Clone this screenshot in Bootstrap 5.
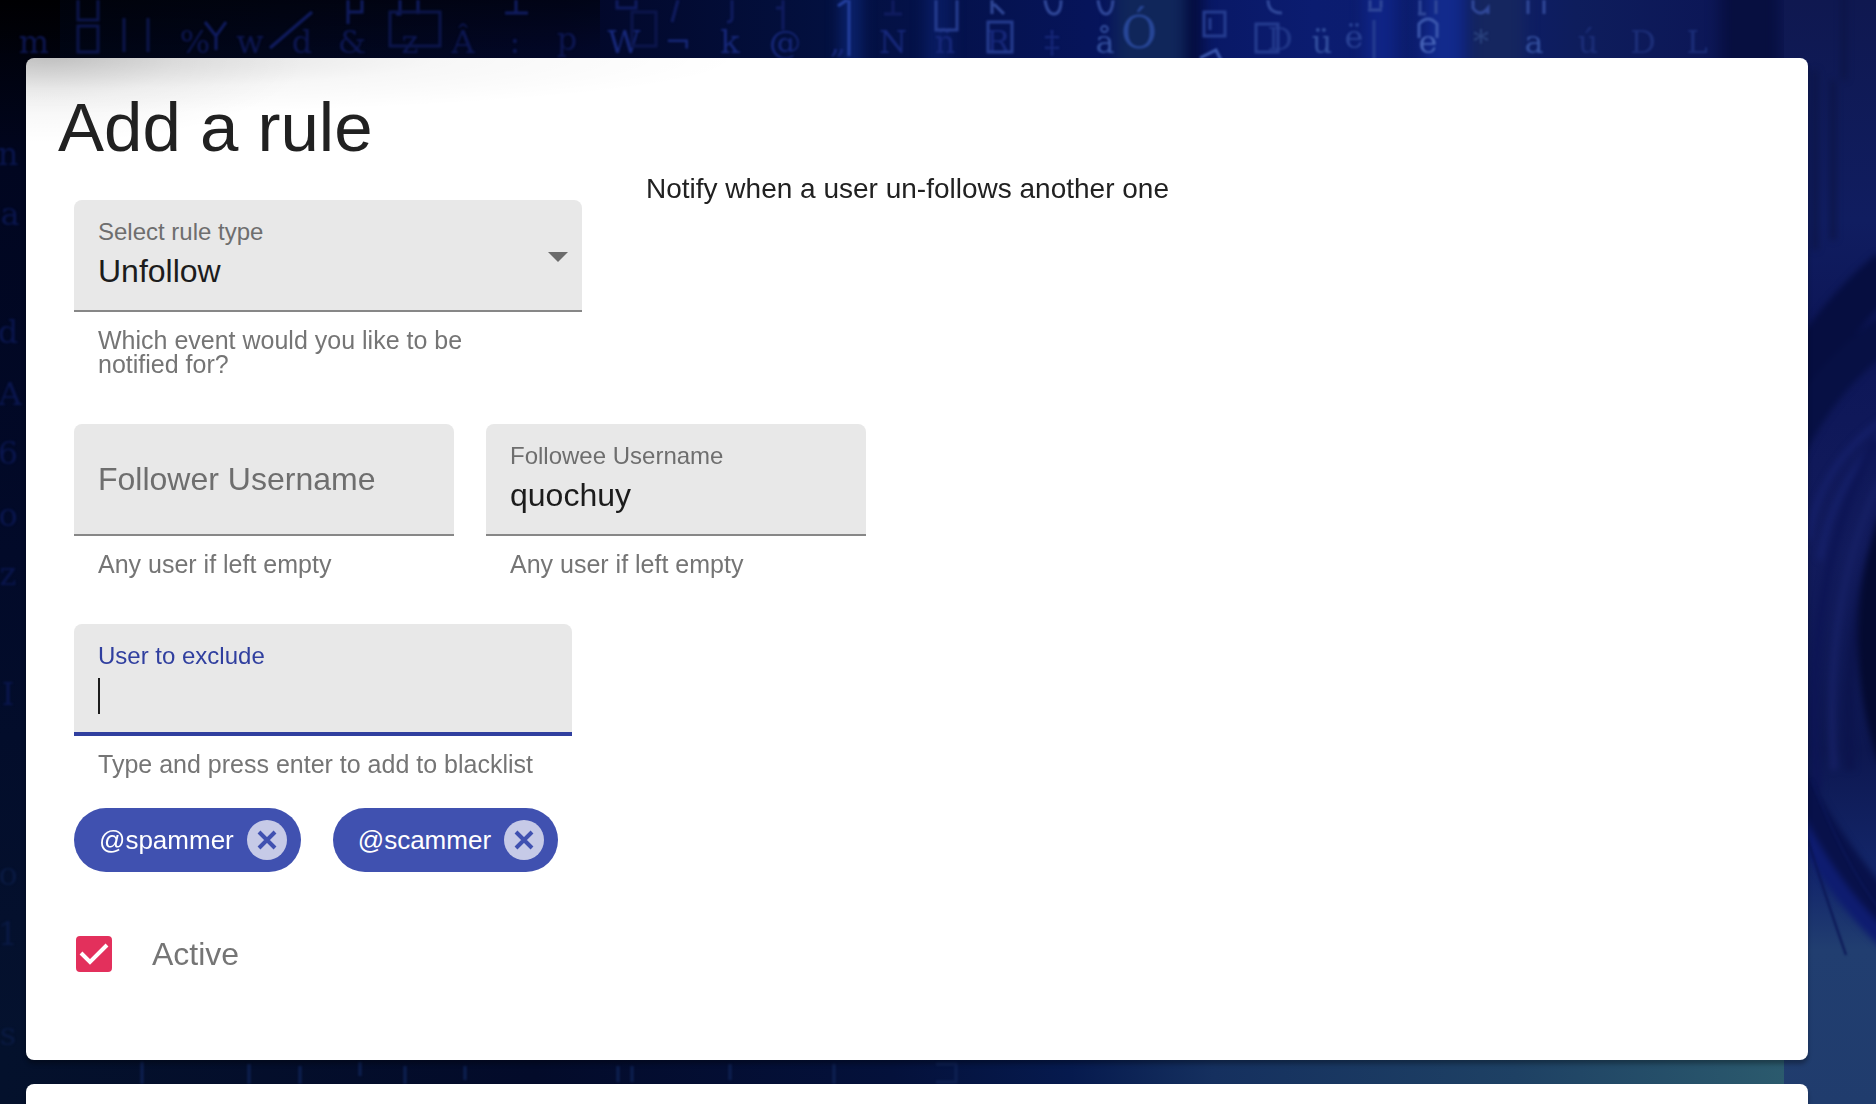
<!DOCTYPE html>
<html lang="en">
<head>
<meta charset="utf-8">
<meta name="viewport" content="width=device-width, initial-scale=1">
<title>Add a rule</title>
<link href="https://cdn.jsdelivr.net/npm/bootstrap@5.3.0/dist/css/bootstrap.min.css" rel="stylesheet">
<style>
  body { font-family: "Liberation Sans", Arial, sans-serif; color: #212121; background: #030a2c; }
  .backdrop { z-index: -1; font-family: "DejaVu Serif", serif; }
  .page { padding: 58px 68px 0 26px; gap: 24px; }
  .panel { border: 0; border-radius: 8px; box-shadow: 0 4px 4px rgba(0, 0, 0, .3); }
  .rule-panel {
    padding: 32px 32px 88px;
    background:
      radial-gradient(ellipse 260px 85px at 20px 0, rgba(0, 0, 0, .12), rgba(0, 0, 0, .04) 50%, transparent),
      radial-gradient(ellipse 680px 56px at 40px 0, rgba(0, 0, 0, .14), rgba(0, 0, 0, .03) 55%, transparent),
      #fff;
  }
  .page-title { font-size: 69px; line-height: 76px; font-weight: 400; }
  .rule-form { padding: 0 16px; }
  .type-row { gap: 64px; }
  .type-col { width: 508px; padding-top: 34px; }
  .user-col { width: 380px; }
  .exclude-col { width: 498px; }
  .description { font-size: 28px; line-height: 46px; }
  .form-row-gap { gap: 32px; margin-top: 48px; }
  .field { height: 112px; padding: 16px 24px 0; background: #e8e8e8; border-bottom: 2px solid #878787; border-radius: 8px 8px 0 0; }
  .field label { display: block; font-size: 24px; line-height: 32px; color: #6e6e6e; }
  .field input, .field select {
    display: block; width: 100%; height: 46px; padding: 0; border: 0; outline: 0; border-radius: 0;
    appearance: none; background: transparent; color: #1c1c1c; font-size: 32px; line-height: 46px;
  }
  .field.empty { padding-top: 0; }
  .field.empty input { height: 110px; }
  .field input::placeholder { color: #6e6e6e; opacity: 1; }
  .field.active { border-bottom: 4px solid #303f9f; }
  .field.active label { color: #303f9f; }
  .field.active input { caret-color: transparent; background: linear-gradient(#1c1c1c, #1c1c1c) 0 6px / 2px 36px no-repeat; }
  .arrow { right: 10px; top: 44px; pointer-events: none; }
  .hint { margin: 16px 0 0; padding-left: 24px; font-size: 25px; line-height: 24px; color: #757575; white-space: nowrap; }
  .chips { gap: 32px; margin-top: 32px; }
  .chip { height: 64px; gap: 13px; padding: 0 14px 0 25px; border-radius: 32px; background: #4051b0; color: #fff; font-size: 26px; line-height: 40px; }
  .chip button { width: 40px; height: 40px; padding: 0; border: 0; border-radius: 50%; background: #c6cae7; color: #4051b0; }
  .active-row { gap: 40px; margin-top: 64px; padding-left: 2px; }
  .active-row label { font-size: 32px; line-height: 34px; color: #757575; }
  .tick { position: relative; width: 36px; height: 36px; }
  .tick input { appearance: none; width: 36px; height: 36px; margin: 0; border-radius: 4px; display: block; border: 3px solid #757575; }
  .tick input:checked { background: #e3305c; border-color: #e3305c; }
  .tick svg { left: 0; top: 0; pointer-events: none; }
</style>
</head>
<body>
<svg class="backdrop position-fixed top-0 start-0 w-100 h-100" viewBox="0 0 1876 1104" preserveAspectRatio="xMidYMid slice" aria-hidden="true">
  <defs>
    <linearGradient id="sky" x1="0" x2="1" y1="0" y2="0">
      <stop offset="0" stop-color="#000412"/><stop offset=".15" stop-color="#01061c"/><stop offset=".3" stop-color="#020728"/>
      <stop offset=".44" stop-color="#03103f"/><stop offset=".58" stop-color="#06145a"/><stop offset=".7" stop-color="#0b1c70"/>
      <stop offset=".78" stop-color="#0c1d6e"/><stop offset=".84" stop-color="#0e1d5c"/><stop offset=".92" stop-color="#0c1656"/><stop offset="1" stop-color="#111a50"/>
    </linearGradient>
    <linearGradient id="leftEdge" x1="0" x2="0" y1="0" y2="1">
      <stop offset="0" stop-color="#000004"/><stop offset=".15" stop-color="#010620"/><stop offset=".5" stop-color="#020a29"/><stop offset="1" stop-color="#05132f"/>
    </linearGradient>
    <linearGradient id="topShade" x1="0" x2="0" y1="0" y2="1">
      <stop offset="0" stop-color="#000" stop-opacity=".45"/><stop offset="1" stop-color="#000" stop-opacity="0"/>
    </linearGradient>
    <linearGradient id="floor" x1="0" x2="1" y1="0" y2="0">
      <stop offset="0" stop-color="#04112c"/><stop offset=".3" stop-color="#030b2a"/><stop offset=".5" stop-color="#04113b"/><stop offset=".6" stop-color="#061a4e"/>
      <stop offset=".68" stop-color="#15305f"/><stop offset=".85" stop-color="#1e4164"/><stop offset="1" stop-color="#2b5a6d"/>
    </linearGradient>
    <linearGradient id="rightEdge" x1="0" x2="0" y1="0" y2="1">
      <stop offset="0" stop-color="#0f1850"/><stop offset=".2" stop-color="#101d60"/><stop offset=".3" stop-color="#0d1657"/><stop offset=".5" stop-color="#121b5c"/>
      <stop offset=".68" stop-color="#0d1750"/><stop offset=".8" stop-color="#14286c"/><stop offset=".86" stop-color="#213e70"/><stop offset="1" stop-color="#203c6d"/>
    </linearGradient>
    <filter id="soft" color-interpolation-filters="sRGB"><feGaussianBlur stdDeviation="7"/></filter>
    <filter id="strands" color-interpolation-filters="sRGB"><feGaussianBlur stdDeviation="3"/></filter>
    <filter id="haze" color-interpolation-filters="sRGB"><feGaussianBlur stdDeviation="1"/></filter>
  </defs>
  <rect width="1876" height="1104" fill="url(#sky)"/>
  <rect width="60" height="1104" fill="url(#leftEdge)"/>
  <rect width="600" height="58" fill="url(#topShade)"/>
  <rect y="1030" width="1784" height="74" fill="url(#floor)"/>
  <g filter="url(#soft)">
    <rect x="840" y="-20" width="22" height="110" fill="#0a2068"/><rect x="925" y="-20" width="26" height="110" fill="#081b60"/>
    <rect x="1115" y="-20" width="70" height="110" fill="#10265a"/><rect x="1186" y="-20" width="16" height="110" fill="#030b3c"/>
    <rect x="1365" y="-20" width="30" height="110" fill="#0f2485"/><rect x="1425" y="-20" width="38" height="110" fill="#122a8c"/>
    <rect x="1470" y="-20" width="55" height="110" fill="#15265f"/><rect x="1720" y="-20" width="60" height="110" fill="#070f40"/>
  </g>
  <rect x="1784" width="92" height="1104" fill="url(#rightEdge)"/>
  <!-- strands of hair down the right side -->
  <g fill="none" filter="url(#strands)">
    <path d="M1790 390Q1840 310 1890 270" stroke="#060e40" stroke-width="42"/>
    <path d="M1780 470Q1815 380 1890 330" stroke="#071044" stroke-width="34"/>
    <path d="M1808 540Q1820 460 1890 415M1820 560Q1830 490 1886 430" stroke="#16216c" stroke-width="5"/>
    <path d="M1818 790Q1800 580 1876 440" stroke="#0d1555" stroke-width="8"/>
    <path d="M1834 770Q1822 600 1880 480" stroke="#162064" stroke-width="7"/>
    <path d="M1850 770Q1842 620 1884 520" stroke="#0c144d" stroke-width="9"/>
    <path d="M1890 520Q1850 640 1890 760" stroke="#040a30" stroke-width="24"/>
    <path d="M1790 770Q1830 850 1890 915" stroke="#08114a" stroke-width="28"/>
    <path d="M1790 805Q1830 890 1890 945" stroke="#0e1c70" stroke-width="16"/>
    <path d="M1815 70V250M1833 80V240M1844 -20V80" stroke="#0c1546" stroke-width="5"/>
  </g>
  <path d="M1808 840Q1825 895 1846 955M1812 780Q1842 860 1880 910" fill="none" stroke="#0b1655" stroke-width="2" filter="url(#haze)"/>
  <!-- falling characters -->
  <g filter="url(#haze)" font-size="32" text-anchor="middle">
    <g fill="#0d1752">
      <text x="34" y="53">m</text><text x="195" y="53">%</text><text x="250" y="53">w</text><text x="302" y="53">d</text>
      <text x="352" y="53">&amp;</text><text x="410" y="53">z</text><text x="463" y="53">Â</text>
      <text x="515" y="53">:</text><text x="567" y="50">p</text>
    </g>
    <g fill="#17287a">
      <text x="624" y="53">W</text><text x="678" y="53">¬</text><text x="730" y="53">k</text><text x="785" y="53">@</text><text x="838" y="53">„</text>
      <text x="893" y="53">N</text><text x="945" y="53">ñ</text><text x="998" y="53">R</text><text x="1052" y="53">‡</text>
    </g>
    <g fill="#34509f">
      <text x="1105" y="53">å</text><text x="1139" y="48" font-size="44" fill="#284798">Ó</text>
      <text x="1280" y="50" fill="#213789">D</text><text x="1322" y="53">ü</text><text x="1354" y="48" fill="#2a4296">ë</text>
      <text x="1428" y="53" fill="#4764b8">e</text><text x="1481" y="53" fill="#2b437f">*</text><text x="1534" y="53">a</text>
    </g>
    <g fill="#1c2e78"><text x="1588" y="53">ú</text><text x="1643" y="53">D</text><text x="1697" y="53">L</text></g>
    <!-- tails of the row above -->
    <g fill="none" stroke="#101c60" stroke-width="3">
      <path d="M205 22L216 36V50M226 22L216 36M348 0V24M348 12H362V0M400 0V14H396M418 14V0M505 13H528M516 0V13M270 48L312 12"/>
      <path d="M617 0V8H636V0M678 0L672 22M732 0V18Q732 22 727 22M783 0V30M783 8H776M884 14H902M893 0V14"/>
    </g>
    <g fill="none" stroke="#31499a" stroke-width="3">
      <path d="M992 0V14M1004 14L994 4M1045 0Q1047 14 1054 14T1061 0M1098 0Q1100 14 1106 14T1113 0M1268 0Q1268 13 1282 13M1368 10H1382M1370 8V0M1381 8V0M1418 14H1426M1420 14V0M1436 14V0M1473 0V8Q1480 18 1488 8V14M1528 14V0M1544 14V0"/>
      <path d="M1419 38V24Q1428 14 1437 24V38M1200 58L1216 50L1222 62" stroke="#3c58ad"/>
    </g>
    <g fill="none" stroke="#0c164c" stroke-width="3"><path d="M78 0V20H98V0M78 26H98V52H78ZM124 18V52M148 18V52M390 12H440V46H390ZM632 12H656V46H632Z"/></g>
    <g fill="none" stroke="#263d90" stroke-width="3"><path d="M1204 12H1225V36H1204ZM1210 18V30M1256 24H1278V52H1256ZM936 0V30H957V0M988 22H1012V52H988ZM1374 20V64"/></g>
    <path d="M849 0V56M838 6L847 0" stroke="#2440a0" stroke-width="3"/>
    <g fill="#0a164e" font-size="32">
      <text x="8" y="165">n</text><text x="10" y="225">a</text><text x="8" y="343">d</text><text x="10" y="405">A</text><text x="8" y="464">6</text><text x="8" y="526">o</text><text x="8" y="585">z</text><text x="8" y="705">I</text>
      <text x="8" y="885" fill="#0a1a42">o</text><text x="8" y="945" fill="#0a1a45">1</text><text x="8" y="1045" fill="#0a1a42">s</text>
    </g>
    <g fill="none" stroke="#0e2052" stroke-width="3"><path d="M142 1062V1084M249 1064V1084M300 1066V1084M360 1062V1076M405 1066V1084M465 1066V1080M618 1066V1082M632 1066V1082M730 1064V1080M834 1064V1084M936 1064H956V1082H936"/></g>
  </g>
</svg>

<main class="page d-flex flex-column vh-100 overflow-hidden">
  <section class="card panel rule-panel flex-shrink-0">
    <h1 class="page-title mb-0">Add a rule</h1>
    <form class="rule-form">
      <div class="type-row d-flex align-items-start">
        <div class="type-col">
          <div class="field position-relative">
            <label for="ruleType">Select rule type</label>
            <select id="ruleType"><option selected>Unfollow</option></select>
            <svg class="arrow position-absolute" width="28" height="24" viewBox="0 0 28 24" aria-hidden="true"><path d="M4 8h20L14 18z" fill="#6b6b6b"/></svg>
          </div>
          <p class="hint">Which event would you like to be<br>notified for?</p>
        </div>
        <p class="description mb-0">Notify when a user un-follows another one</p>
      </div>

      <div class="form-row-gap d-flex">
        <div class="user-col">
          <div class="field empty"><input type="text" id="follower" aria-label="Follower Username" placeholder="Follower Username"></div>
          <p class="hint">Any user if left empty</p>
        </div>
        <div class="user-col">
          <div class="field">
            <label for="followee">Followee Username</label>
            <input type="text" id="followee" value="quochuy">
          </div>
          <p class="hint">Any user if left empty</p>
        </div>
      </div>

      <div class="form-row-gap d-flex">
        <div class="exclude-col">
          <div class="field active">
            <label for="exclude">User to exclude</label>
            <input type="text" id="exclude">
          </div>
          <p class="hint">Type and press enter to add to blacklist</p>
        </div>
      </div>

      <div class="chips d-flex">
        <div class="chip d-flex align-items-center">
          <span>@spammer</span>
          <button type="button" class="d-flex align-items-center justify-content-center" aria-label="Remove @spammer"><svg width="20" height="20" viewBox="0 0 20 20"><path d="M2 2l16 16M18 2L2 18" stroke="currentColor" stroke-width="4"/></svg></button>
        </div>
        <div class="chip d-flex align-items-center">
          <span>@scammer</span>
          <button type="button" class="d-flex align-items-center justify-content-center" aria-label="Remove @scammer"><svg width="20" height="20" viewBox="0 0 20 20"><path d="M2 2l16 16M18 2L2 18" stroke="currentColor" stroke-width="4"/></svg></button>
        </div>
      </div>

      <div class="active-row d-flex align-items-center">
        <div class="tick">
          <input type="checkbox" id="activeRule" checked>
          <svg class="position-absolute" width="36" height="36" viewBox="0 0 36 36" aria-hidden="true"><path d="M5 17l9 9L31 9" fill="none" stroke="#fff" stroke-width="4"/></svg>
        </div>
        <label for="activeRule">Active</label>
      </div>
    </form>
  </section>
  <section class="card panel flex-grow-1 rounded-bottom-0"></section>
</main>
<script src="https://cdn.jsdelivr.net/npm/bootstrap@5.3.0/dist/js/bootstrap.bundle.min.js"></script>
</body>
</html>
